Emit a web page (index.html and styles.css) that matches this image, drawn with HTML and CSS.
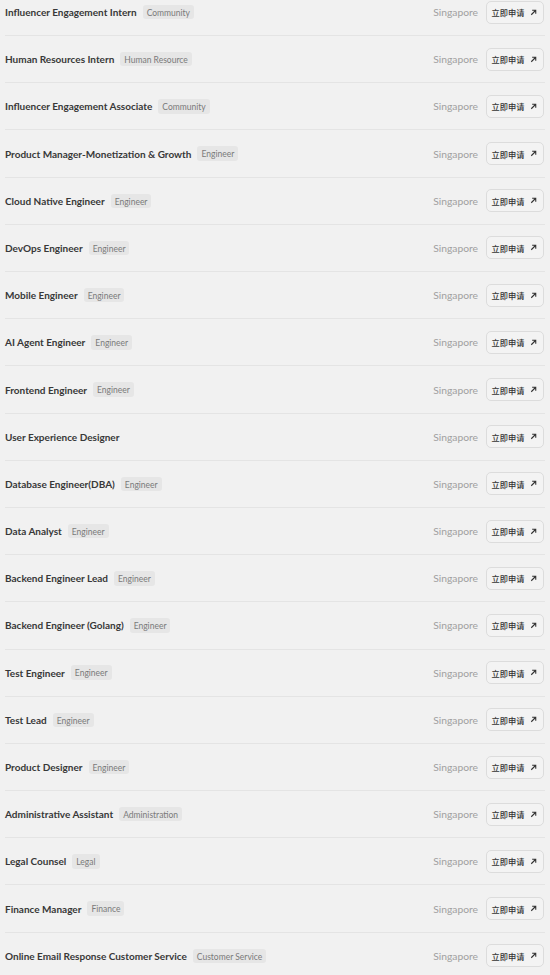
FILE: index.html
```html
<!DOCTYPE html>
<html lang="en">
<head>
<meta charset="utf-8">
<link rel="stylesheet" href="styles.css">
</head>
<body>
<div class="list">
  <div class="row"><div class="left"><span class="title">Influencer Engagement Intern</span><span class="tag">Community</span></div><div class="right"><span class="loc">Singapore</span><a class="btn">立即申请<svg viewBox="0 0 10 10"><path d="M2.5 7.5L7.5 2.5M3.5 2.5H7.5V6.5"/></svg></a></div></div>
  <div class="row"><div class="left"><span class="title">Human Resources Intern</span><span class="tag">Human Resource</span></div><div class="right"><span class="loc">Singapore</span><a class="btn">立即申请<svg viewBox="0 0 10 10"><path d="M2.5 7.5L7.5 2.5M3.5 2.5H7.5V6.5"/></svg></a></div></div>
  <div class="row"><div class="left"><span class="title">Influencer Engagement Associate</span><span class="tag">Community</span></div><div class="right"><span class="loc">Singapore</span><a class="btn">立即申请<svg viewBox="0 0 10 10"><path d="M2.5 7.5L7.5 2.5M3.5 2.5H7.5V6.5"/></svg></a></div></div>
  <div class="row"><div class="left"><span class="title">Product Manager-Monetization &amp; Growth</span><span class="tag">Engineer</span></div><div class="right"><span class="loc">Singapore</span><a class="btn">立即申请<svg viewBox="0 0 10 10"><path d="M2.5 7.5L7.5 2.5M3.5 2.5H7.5V6.5"/></svg></a></div></div>
  <div class="row"><div class="left"><span class="title">Cloud Native Engineer</span><span class="tag">Engineer</span></div><div class="right"><span class="loc">Singapore</span><a class="btn">立即申请<svg viewBox="0 0 10 10"><path d="M2.5 7.5L7.5 2.5M3.5 2.5H7.5V6.5"/></svg></a></div></div>
  <div class="row"><div class="left"><span class="title">DevOps Engineer</span><span class="tag">Engineer</span></div><div class="right"><span class="loc">Singapore</span><a class="btn">立即申请<svg viewBox="0 0 10 10"><path d="M2.5 7.5L7.5 2.5M3.5 2.5H7.5V6.5"/></svg></a></div></div>
  <div class="row"><div class="left"><span class="title">Mobile Engineer</span><span class="tag">Engineer</span></div><div class="right"><span class="loc">Singapore</span><a class="btn">立即申请<svg viewBox="0 0 10 10"><path d="M2.5 7.5L7.5 2.5M3.5 2.5H7.5V6.5"/></svg></a></div></div>
  <div class="row"><div class="left"><span class="title">AI Agent Engineer</span><span class="tag">Engineer</span></div><div class="right"><span class="loc">Singapore</span><a class="btn">立即申请<svg viewBox="0 0 10 10"><path d="M2.5 7.5L7.5 2.5M3.5 2.5H7.5V6.5"/></svg></a></div></div>
  <div class="row"><div class="left"><span class="title">Frontend Engineer</span><span class="tag">Engineer</span></div><div class="right"><span class="loc">Singapore</span><a class="btn">立即申请<svg viewBox="0 0 10 10"><path d="M2.5 7.5L7.5 2.5M3.5 2.5H7.5V6.5"/></svg></a></div></div>
  <div class="row"><div class="left"><span class="title">User Experience Designer</span></div><div class="right"><span class="loc">Singapore</span><a class="btn">立即申请<svg viewBox="0 0 10 10"><path d="M2.5 7.5L7.5 2.5M3.5 2.5H7.5V6.5"/></svg></a></div></div>
  <div class="row"><div class="left"><span class="title">Database Engineer(DBA)</span><span class="tag">Engineer</span></div><div class="right"><span class="loc">Singapore</span><a class="btn">立即申请<svg viewBox="0 0 10 10"><path d="M2.5 7.5L7.5 2.5M3.5 2.5H7.5V6.5"/></svg></a></div></div>
  <div class="row"><div class="left"><span class="title">Data Analyst</span><span class="tag">Engineer</span></div><div class="right"><span class="loc">Singapore</span><a class="btn">立即申请<svg viewBox="0 0 10 10"><path d="M2.5 7.5L7.5 2.5M3.5 2.5H7.5V6.5"/></svg></a></div></div>
  <div class="row"><div class="left"><span class="title">Backend Engineer Lead</span><span class="tag">Engineer</span></div><div class="right"><span class="loc">Singapore</span><a class="btn">立即申请<svg viewBox="0 0 10 10"><path d="M2.5 7.5L7.5 2.5M3.5 2.5H7.5V6.5"/></svg></a></div></div>
  <div class="row"><div class="left"><span class="title">Backend Engineer (Golang)</span><span class="tag">Engineer</span></div><div class="right"><span class="loc">Singapore</span><a class="btn">立即申请<svg viewBox="0 0 10 10"><path d="M2.5 7.5L7.5 2.5M3.5 2.5H7.5V6.5"/></svg></a></div></div>
  <div class="row"><div class="left"><span class="title">Test Engineer</span><span class="tag">Engineer</span></div><div class="right"><span class="loc">Singapore</span><a class="btn">立即申请<svg viewBox="0 0 10 10"><path d="M2.5 7.5L7.5 2.5M3.5 2.5H7.5V6.5"/></svg></a></div></div>
  <div class="row"><div class="left"><span class="title">Test Lead</span><span class="tag">Engineer</span></div><div class="right"><span class="loc">Singapore</span><a class="btn">立即申请<svg viewBox="0 0 10 10"><path d="M2.5 7.5L7.5 2.5M3.5 2.5H7.5V6.5"/></svg></a></div></div>
  <div class="row"><div class="left"><span class="title">Product Designer</span><span class="tag">Engineer</span></div><div class="right"><span class="loc">Singapore</span><a class="btn">立即申请<svg viewBox="0 0 10 10"><path d="M2.5 7.5L7.5 2.5M3.5 2.5H7.5V6.5"/></svg></a></div></div>
  <div class="row"><div class="left"><span class="title">Administrative Assistant</span><span class="tag">Administration</span></div><div class="right"><span class="loc">Singapore</span><a class="btn">立即申请<svg viewBox="0 0 10 10"><path d="M2.5 7.5L7.5 2.5M3.5 2.5H7.5V6.5"/></svg></a></div></div>
  <div class="row"><div class="left"><span class="title">Legal Counsel</span><span class="tag">Legal</span></div><div class="right"><span class="loc">Singapore</span><a class="btn">立即申请<svg viewBox="0 0 10 10"><path d="M2.5 7.5L7.5 2.5M3.5 2.5H7.5V6.5"/></svg></a></div></div>
  <div class="row"><div class="left"><span class="title">Finance Manager</span><span class="tag">Finance</span></div><div class="right"><span class="loc">Singapore</span><a class="btn">立即申请<svg viewBox="0 0 10 10"><path d="M2.5 7.5L7.5 2.5M3.5 2.5H7.5V6.5"/></svg></a></div></div>
  <div class="row"><div class="left"><span class="title">Online Email Response Customer Service</span><span class="tag">Customer Service</span></div><div class="right"><span class="loc">Singapore</span><a class="btn">立即申请<svg viewBox="0 0 10 10"><path d="M2.5 7.5L7.5 2.5M3.5 2.5H7.5V6.5"/></svg></a></div></div>
</div>
</body>
</html>
```
FILE: styles.css
```css
html, body {
  margin: 0;
  padding: 0;
  background: #f1f1f1;
  font-family: Lato, "Noto Sans CJK SC", sans-serif;
  overflow: hidden;
}
.list {
  margin-top: -11.1px;
  padding: 0 5px;
}
.row {
  height: 46.2px;
  border-bottom: 1px solid #e4e4e4;
  display: flex;
  align-items: center;
  justify-content: space-between;
}
.left {
  display: flex;
  align-items: center;
  gap: 6px;
}
.title {
  font-size: 10px;
  font-weight: 700;
  color: #383838;
}
.tag {
  font-size: 8.5px;
  color: #7a7a7a;
  background: #e6e6e6;
  border-radius: 3px;
  padding: 3px 4px 1.5px;
  line-height: 10px;
}
.right {
  display: flex;
  align-items: center;
  gap: 8px;
  padding-right: 1px;
}
.loc {
  font-size: 10.3px;
  color: #a0a0a0;
}
.btn {
  display: flex;
  align-items: center;
  justify-content: center;
  gap: 5px;
  width: 58px;
  height: 23px;
  box-sizing: border-box;
  padding: 0 4px;
  border: 1px solid #dcdcdc;
  border-radius: 5px;
  background: #f3f3f3;
  font-family: "Noto Sans CJK SC", sans-serif;
  font-size: 8.2px;
  font-weight: 500;
  color: #333;
  white-space: nowrap;
}
.btn svg {
  flex-shrink: 0;
  width: 9px;
  height: 9px;
  fill: none;
  stroke: #333;
  stroke-width: 1.2;
}
```
